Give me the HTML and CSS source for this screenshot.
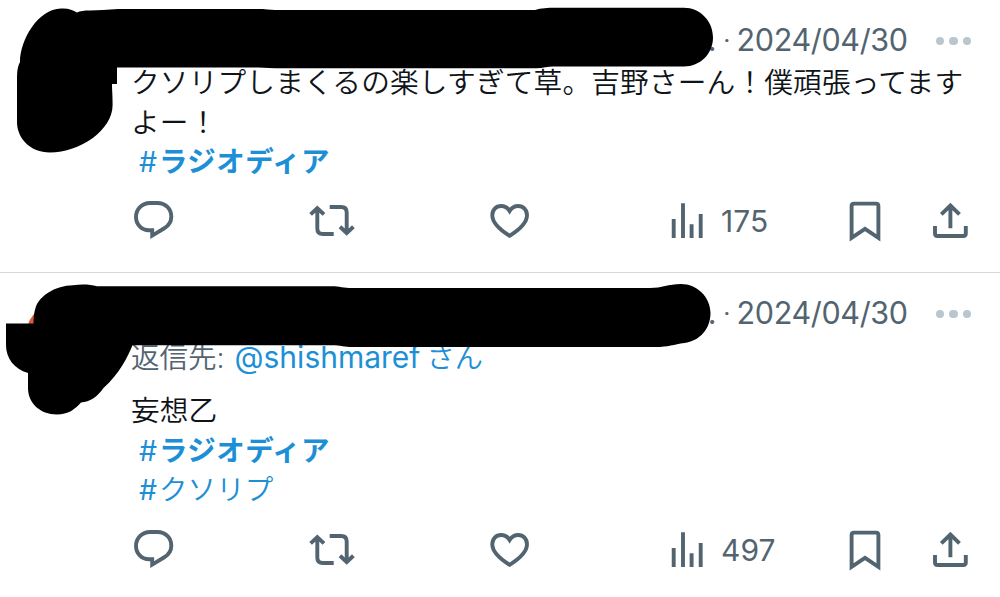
FILE: index.html
```html
<!DOCTYPE html>
<html lang="ja">
<head>
  <meta charset="UTF-8">
  <meta name="viewport" content="width=device-width, initial-scale=1.0">
  <title>#ラジオディア</title>
  <link rel="stylesheet" href="styles.css">
</head>
<body>
  <!-- shared action icons -->
  <svg class="sprite" width="0" height="0">
    <symbol id="reply" viewBox="0 0 48 48">
      <path d="M20.2 33.3H17C9.5 33.3 4 27.4 4 20S9.8 6 18 6h7.5c8 0 13.8 6 13.8 13.5 0 5.2-2.8 9.3-7 11.8L20.2 38.6z"/>
    </symbol>
    <symbol id="repost" viewBox="0 0 48 48">
      <path d="M9.3 12v19.5q0 5.5 5.5 5.5h10.9M2.6 17.4l6.7-6.2 6.7 6.2M21.7 10h11.5q5.5 0 5.5 5.5V35M32 29.8l6.7 6.2 6.7-6.2"/>
    </symbol>
    <symbol id="like" viewBox="0 0 48 48">
      <path d="M20.6 38.8C12 33.5 3.3 27 3.3 18.3 3.3 13 7 9 12 9c3.8 0 6.7 2 8.6 5 1.9-3 4.8-5 8.6-5 5 0 8.8 4 8.8 9.3 0 8.7-8.8 15.2-17.4 20.5z"/>
    </symbol>
    <symbol id="views" viewBox="0 0 48 48">
      <path d="M2.7 22v19M12 6.3V41M20.6 27.3V41M29.7 17v24"/>
    </symbol>
    <symbol id="bookmark" viewBox="0 0 48 48">
      <path d="M3.6 9q0-2.4 2.4-2.4h22q2.4 0 2.4 2.4v31.8L17 31.8 3.6 40.8z"/>
    </symbol>
    <symbol id="share" viewBox="0 0 48 48">
      <path d="M3 29v7.5Q3 39 5.5 39h25.8q2.5 0 2.5-2.5V29M18.4 31.3V10M9.3 17.4l9.1-8.9 9.1 8.9"/>
    </symbol>
  </svg>

  <article class="tweet first">
    <header class="tweet-header">
      <span class="handle">.</span>
      <span class="sep">·</span>
      <time>2024/04/30</time>
      <span class="more"><i></i><i></i><i></i></span>
    </header>
    <div class="tweet-text">
      <p>クソリプしまくるの楽しすぎて草。吉野さーん！僕頑張ってますよー！</p>
      <p class="tag"><span class="hash">#</span><b>ラジオディア</b></p>
    </div>
    <div class="actions">
      <svg><use href="#reply"/></svg>
      <svg><use href="#repost"/></svg>
      <svg><use href="#like"/></svg>
      <span class="views"><svg><use href="#views"/></svg>175</span>
      <svg><use href="#bookmark"/></svg>
      <svg><use href="#share"/></svg>
    </div>
    <svg class="redaction" viewBox="0 0 1000 272">
      <path d="M20 62C20 40 38 9 61 8.5c7-.5 12 1.5 16 4 3-1.5 7-2 13-2l13-.5 15-1h140c7 0 12 .7 17 1h260c6-1.8 13-2.2 20-2.2h129c16 0 29 13.2 29 29.7s-13 29-29 29H553c-5 0-10 1.7-17 1.8H275l-17-.8H117V84h-5c0 6 .6 11 .6 21 0 25-32.6 47.5-62.6 47.5-20 0-33-14.5-33-30.5V78c0-8 1-12 3-16z"/>
    </svg>
  </article>

  <article class="tweet second">
    <header class="tweet-header">
      <span class="handle">.</span>
      <span class="sep">·</span>
      <time>2024/04/30</time>
      <span class="more"><i></i><i></i><i></i></span>
    </header>
    <div class="reply-to">返信先: <a>@shishmaref<span class="san">さん</span></a></div>
    <div class="tweet-text">
      <p>妄想乙</p>
      <p class="tag"><span class="hash">#</span><b>ラジオディア</b></p>
      <p class="tag"><span class="hash">#</span>クソリプ</p>
    </div>
    <div class="actions">
      <svg><use href="#reply"/></svg>
      <svg><use href="#repost"/></svg>
      <svg><use href="#like"/></svg>
      <span class="views"><svg><use href="#views"/></svg>497</span>
      <svg><use href="#bookmark"/></svg>
      <svg><use href="#share"/></svg>
    </div>
    <svg class="redaction" viewBox="0 273 1000 324">
      <path class="avatar" d="M28 325q1-6 8-13v13z"/>
      <path d="M6 323.5h27.5c0-6 .5-11 2-15.5 3.5-12 20-22.5 37.5-22.7 8-1.2 17-1 24 .9h235c7 0 12 1.8 20 1.8h298c12 0 18-4 31-4 16 0 29.5 13 29.5 29s-11 28-26 30c-11 1.5-16 4-29 4H352c-7 0-12-1.7-20-1.8H132.5C127 358 120 373 103.5 388 97 397 90 402 81 402.5c-6 7-13 12-24 12-17 0-29-11.5-29-26.5v-15C14 369 6 358 6 345z"/>
    </svg>
  </article>
</body>
</html>
```
FILE: styles.css
```css
body {
  margin: 0;
  width: 1000px;
  background: #fff;
  color: #0f1419;
  font-family: Inter, "Noto Sans CJK JP", sans-serif;
}
p {
  margin: 0;
  height: 39.5px;
}
.sprite {
  position: absolute;
}
.tweet {
  position: relative;
  box-sizing: border-box;
  padding-left: 131px;
}
.first {
  height: 273px;
  border-bottom: 1px solid #d5d9db;
}
.second {
  height: 324px;
}
.tweet-header {
  display: flex;
  justify-content: flex-end;
  align-items: center;
  height: 40px;
  padding: 20px 29px 0 0;
  font-size: 30.5px;
  line-height: 40px;
  color: #536471;
}
.handle {
  margin-right: 6px;
}
.sep {
  width: 14px;
  font-weight: 300;
}
time {
  width: 172px;
  letter-spacing: -0.35px;
  white-space: nowrap;
}
.more {
  display: flex;
  gap: 5px;
  margin: 2px 0 0 27px;
}
.more i {
  width: 8.5px;
  height: 8.5px;
  border-radius: 50%;
  background: #b9c6ce;
}
.tweet-text {
  width: 850px;
  font-family: "Noto Sans CJK JP", sans-serif;
  font-size: 28.7px;
  font-weight: 350;
  line-height: 40px;
  letter-spacing: 0.1px;
}
.first .tweet-text {
  padding-top: 1px;
}
.first .tweet-text p:first-child {
  height: 79px;
  letter-spacing: 0.15px;
}
.tag {
  padding-left: 8px;
}
.tweet-text .tag {
  font-size: 28.5px;
  color: #1d8fd6;
}
.hash {
  display: inline-block;
  width: 20px;
  font-family: Inter, sans-serif;
  font-weight: 400;
}
.tag b {
  font-weight: 700;
  letter-spacing: 0.4px;
}
.reply-to {
  height: 40px;
  margin-top: 4px;
  font-size: 28.5px;
  font-weight: 350;
  line-height: 40px;
  white-space: nowrap;
  color: #536471;
}
.reply-to a {
  margin-left: 2px;
  font-size: 30px;
  font-weight: 400;
  color: #1d8fd6;
}
.san {
  margin-left: 6px;
  font-size: 28.2px;
  font-weight: 350;
}
.second .tweet-text {
  margin-top: 12px;
}
.actions {
  display: grid;
  grid-template-columns: 176px 181px 182px 177px 84px 48px;
  align-items: center;
  height: 48px;
  margin: 18px 0 0 1px;
  color: #536471;
}
.first .actions {
  margin-top: 17.5px;
}
.second .actions {
  margin-top: 18.5px;
}
.actions svg {
  width: 48px;
  height: 48px;
  fill: none;
  stroke: #536471;
  stroke-width: 3.9;
}
.views {
  display: flex;
  align-items: center;
  gap: 2px;
  height: 48px;
  font-size: 30px;
}
/* marker strokes over the account names */
.redaction {
  position: absolute;
  top: 0;
  left: 0;
  width: 1000px;
}
.redaction .avatar {
  fill: #e0593a;
}
```
